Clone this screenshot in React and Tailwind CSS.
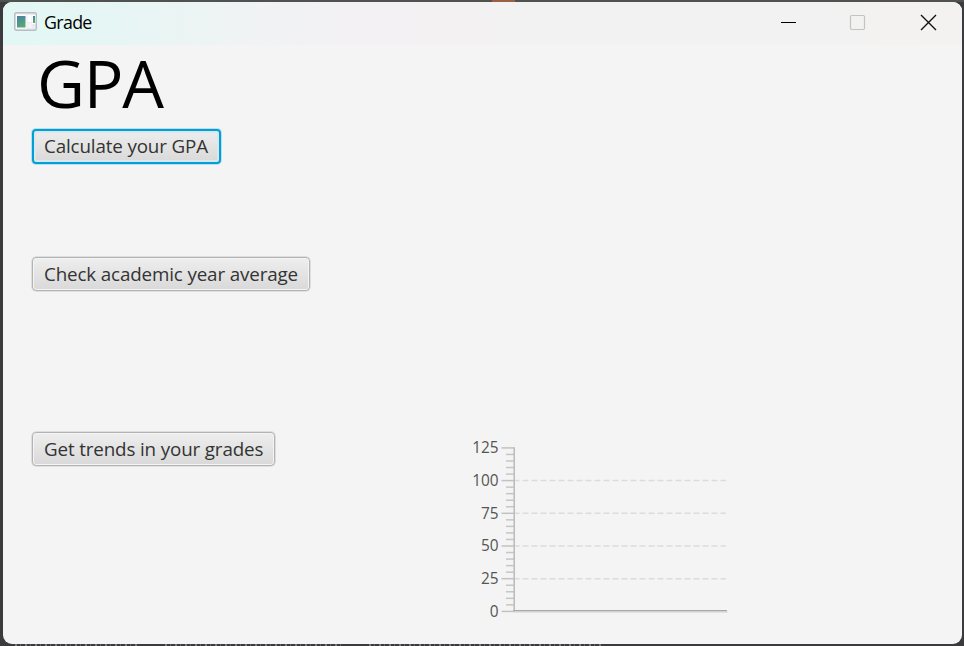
import React from 'react';

const MAJOR = [125, 100, 75, 50, 25, 0];
const TOP = 447.9;
const STEP = 32.7;
const MINOR = Array.from({ length: 25 }, (_, i) => i).filter((i) => i % 5 !== 0);

function AppIcon() {
  return (
    <svg width="23" height="19" viewBox="0 0 23 19" className="block">
      <defs>
        <linearGradient id="pane" x1="0" y1="0" x2="0.4" y2="1">
          <stop offset="0" stopColor="#4a7fa5" />
          <stop offset="1" stopColor="#55a878" />
        </linearGradient>
      </defs>
      <rect x="0.7" y="0.7" width="21.6" height="17.6" rx="1.5" fill="#e9ebee" stroke="#b9bdc4" strokeWidth="1.4" />
      <rect x="2" y="2.5" width="10.5" height="14" fill="#fff" />
      <rect x="3" y="4" width="8.5" height="11.5" fill="url(#pane)" />
      <rect x="13.5" y="3" width="4" height="7" fill="#fff" />
      <rect x="13.5" y="11" width="4" height="5" fill="#f4f5f7" />
      <rect x="18.2" y="3" width="3" height="9" fill="#fff" />
      <rect x="19" y="4" width="2" height="7" fill="url(#pane)" />
    </svg>
  );
}

function Titlebar() {
  return (
    <header className="flex h-[43px] items-start bg-[linear-gradient(90deg,#e2f8f5_0px,#e5f6f4_100px,#f0f3f4_240px,#f3f1f3_340px,#f3f2f2_600px,#f2f2f2_760px,#f4f2f1_960px)]">
      <div className="ml-[11px] mt-[10px]"><AppIcon /></div>
      <span className="ml-[7px] mt-[8px] text-[17.8px] leading-6 tracking-[-0.65px] text-black">Grade</span>
      <svg width="160" height="20" viewBox="0 0 160 20" className="ml-auto mr-[22px] mt-[10px] block" fill="none">
        <path d="M1 10.5H16" stroke="#000" />
        <rect x="70.5" y="3.5" width="14" height="14" rx="1.2" stroke="#c3c3c3" strokeWidth="1.2" />
        <path d="M141 3L156 18M156 3L141 18" stroke="#111" strokeWidth="1.4" />
      </svg>
    </header>
  );
}

function Button({ children, className, focused }) {
  const look = focused
    ? 'border-2 border-[#039ed3] shadow-[0_0_0_1px_#b4e0ef,inset_0_0_0_2px_#d9e8ee] pl-[10px]'
    : 'border border-[#b3b3b3] shadow-[0_0_0_0.5px_#c8c8c8,0_1px_0_#f9f9f9,inset_0_0_0_1px_#f4f4f4] pl-[11px]';
  return (
    <button
      className={`flex items-start whitespace-nowrap rounded-[4px] bg-linear-to-b from-[#eeeeee] to-[#d9d9d9] text-[18.8px] leading-6 tracking-[-0.14px] text-[#333] ${look} ${className}`}
    >
      {children}
    </button>
  );
}

function Chart() {
  return (
    <svg width="280" height="190" viewBox="460 435 280 190" className="block">
      {MAJOR.slice(1, 5).map((v, i) => (
        <path key={v} d={`M513.5 ${TOP + STEP * (i + 1)}H726`} stroke="#dbdbdb" strokeWidth="1.5" strokeDasharray="6 3" />
      ))}
      {MINOR.map((i) => (
        <path key={i} d={`M506 ${TOP + (STEP / 5) * i}H514`} stroke="#c6c6c6" strokeWidth="1.5" />
      ))}
      {MAJOR.map((v, i) => (
        <g key={v}>
          <path d={`M501.5 ${TOP + STEP * i}H514`} stroke="#c2c2c2" strokeWidth="1.5" />
          <text x="498.6" y={TOP + STEP * i + 5.4} textAnchor="end" fontSize="15.4" fill="#555">{v}</text>
        </g>
      ))}
      <path d="M514.2 447.2V612" stroke="#bdbdbd" strokeWidth="1.6" />
      <path d="M513.5 610.6H727" stroke="#a8a8a8" strokeWidth="1.3" />
      <path d="M513.5 611.8H727.5" stroke="#cecece" strokeWidth="1.2" />
    </svg>
  );
}

export default function App() {
  return (
    <div className="flex h-[646px] w-[964px] flex-col overflow-hidden bg-[#3b3a3c] font-['Open_Sans','Noto_Sans',sans-serif]">
      <div className="flex h-[2px] bg-[#505250]">
        <div className="ml-[492px] h-[2px] w-[23px] bg-[#9a5f45]" />
      </div>
      <div className="ml-[3px] h-[642px] w-[959px] overflow-hidden rounded-[9px] bg-[#f4f4f4]">
        <Titlebar />
        <main className="pl-[29px]">
          <h1 className="ml-[5px] h-[84px] text-[66px] font-normal leading-[74px] tracking-[-1.2px] text-black">GPA</h1>
          <Button focused className="h-[35px] w-[189px] pt-[3px]">Calculate your GPA</Button>
          <Button className="mt-[93px] h-[34px] w-[278px] pt-[4px]">Check academic year average</Button>
          <div className="mt-[141px] flex items-start">
            <Button className="h-[34px] w-[243px] pt-[4px]">Get trends in your grades</Button>
            <div className="ml-[185px] mt-[3px]"><Chart /></div>
          </div>
        </main>
      </div>
      <div className="flex h-[2px] pl-[15px]">
        <div className="h-[2px] w-[122px] bg-[repeating-linear-gradient(90deg,#77797c_0_2px,#3b3a3c_2px_5px,#62605c_5px_6px,#3b3a3c_6px_10px)]" />
        <div className="ml-[28px] h-[2px] w-[176px] bg-[repeating-linear-gradient(90deg,#77797c_0_2px,#3b3a3c_2px_5px,#62605c_5px_6px,#3b3a3c_6px_10px)]" />
        <div className="ml-[28px] h-[2px] w-[235px] bg-[repeating-linear-gradient(90deg,#77797c_0_2px,#3b3a3c_2px_5px,#62605c_5px_6px,#3b3a3c_6px_10px)]" />
      </div>
    </div>
  );
}
